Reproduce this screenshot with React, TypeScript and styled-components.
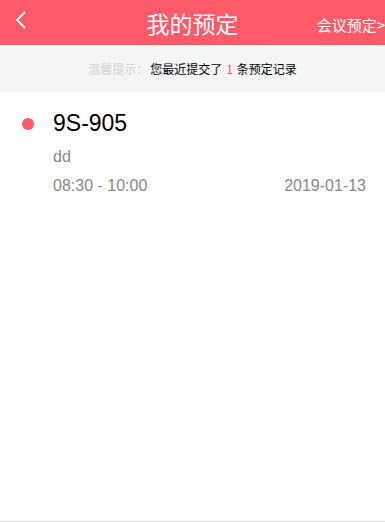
import React from "react";
import styled, { createGlobalStyle } from "styled-components";

const GlobalStyle = createGlobalStyle`
  html, body {
    margin: 0;
    padding: 0;
    background: #fff;
    font-family: "Microsoft YaHei", "Noto Sans CJK SC", "Liberation Sans", sans-serif;
  }
`;

const Page = styled.div`
  width: 385px;
  height: 522px;
  display: flex;
  flex-direction: column;
  border-bottom: 1px solid #dcdcdc;
  box-sizing: border-box;
  overflow: hidden;
`;

const Header = styled.header`
  height: 45px;
  background: #ff5a6a;
  display: grid;
  grid-template-columns: 70px 1fr 70px;
  align-items: center;
  color: #fff;
`;

const Back = styled.div`
  padding-left: 14px;
  display: flex;
  align-items: center;
  height: 45px;
  margin-top: -6px;
`;

const Title = styled.h1`
  margin: 0;
  font-size: 23px;
  font-weight: normal;
  text-align: center;
`;

const Action = styled.div`
  font-size: 15px;
  white-space: nowrap;
  justify-self: end;
  margin-top: 4px;
`;

const Notice = styled.div`
  height: 47px;
  background: #f3f5f7;
  display: flex;
  align-items: center;
  justify-content: center;
  font-size: 12px;
  color: #000;
`;

const Hint = styled.span`
  color: #d2d2d2;
  margin-right: 2px;
`;

const Count = styled.span`
  color: #ff5a6a;
  margin: 0 4px;
`;

const Item = styled.div`
  display: grid;
  grid-template-columns: 53px 1fr auto;
  padding: 18px 19px 0 0;
`;

const Dot = styled.span`
  width: 12px;
  height: 12px;
  border-radius: 50%;
  background: #ff5a6a;
  margin: 8px 0 0 22px;
`;

const Info = styled.div`
  display: flex;
  flex-direction: column;
  grid-column: 2 / 4;
`;

const RoomName = styled.div`
  font-size: 23px;
  color: #000;
  font-family: "Liberation Sans", "Noto Sans CJK SC", sans-serif;
  line-height: 26px;
`;

const Note = styled.div`
  font-size: 16px;
  color: #888;
  margin-top: 11px;
  line-height: 20px;
  font-family: "Liberation Sans", sans-serif;
`;

const Meta = styled.div`
  display: flex;
  justify-content: space-between;
  font-size: 16px;
  color: #888;
  margin-top: 9px;
  line-height: 20px;
  font-family: "Liberation Sans", sans-serif;
`;

export default function App() {
  return (
    <>
      <GlobalStyle />
      <Page>
        <Header>
          <Back>
            <svg width="14" height="20" viewBox="0 0 14 20">
              <path d="M11 2 L3 10 L11 18" fill="none" stroke="#fff" strokeWidth="1.8" />
            </svg>
          </Back>
          <Title>我的预定</Title>
          <Action>会议预定&gt;</Action>
        </Header>
        <Notice>
          <Hint>温馨提示：</Hint>
          您最近提交了<Count>1</Count>条预定记录
        </Notice>
        <Item>
          <Dot />
          <Info>
            <RoomName>9S-905</RoomName>
            <Note>dd</Note>
            <Meta>
              <span>08:30 - 10:00</span>
              <span>2019-01-13</span>
            </Meta>
          </Info>
        </Item>
      </Page>
    </>
  );
}
